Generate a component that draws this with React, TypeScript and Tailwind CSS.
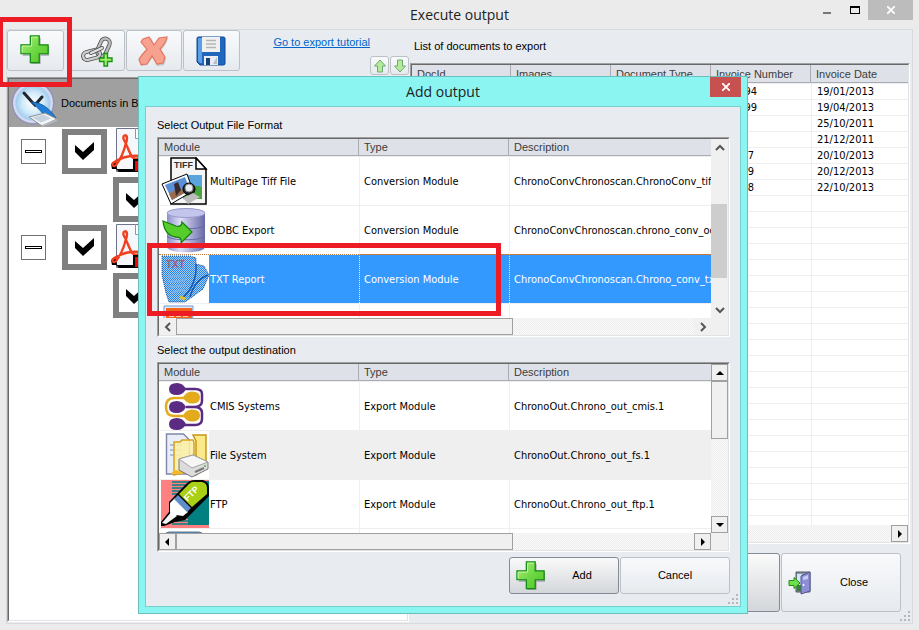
import React from "react";

const CHECKER =
  "bg-[repeating-conic-gradient(#ececec_0_25%,#fbfbfb_0_50%)] bg-[length:2px_2px]";
const UI_FONT = "font-['Liberation_Sans',sans-serif]";

function PlusIcon({ size }: { size: number }) {
  return (
    <svg width={size} height={size} viewBox="0 0 32 32" className="shrink-0" aria-hidden="true">
      <defs>
        <linearGradient id="plus" x1="0" y1="0" x2="1" y2="1">
          <stop offset="0" stopColor="#b4f07c" />
          <stop offset="0.5" stopColor="#6fd846" />
          <stop offset="1" stopColor="#4fc41f" />
        </linearGradient>
      </defs>
      <path d="M12 3h10v9h9v10h-9v9H12v-9H3V12h9z" fill="#8b8f93" opacity=".7" />
      <path d="M11 1h9.500v9.500H30v9.500h-9.500V29.500H11V20H1v-9.500h10z" fill="url(#plus)" stroke="#0f8a12" strokeWidth="1.300" />
      <path d="M12.300 11.800V2.300h6.900M2.300 18.500v-6.700h10" fill="none" stroke="#c9f7a4" strokeWidth="1" />
    </svg>
  );
}

function ChainIcon() {
  return (
    <svg width="32" height="32" viewBox="0 0 32 32" aria-hidden="true">
      <g fill="none" strokeLinejoin="round">
        <rect x="18" y="3" width="9" height="18" rx="4.500" transform="rotate(24 22 12)" stroke="#4d4d4d" strokeWidth="4" />
        <rect x="18" y="3" width="9" height="18" rx="4.500" transform="rotate(24 22 12)" stroke="#bdbdbd" strokeWidth="2.400" />
        <rect x="2" y="16" width="17" height="8" rx="4" transform="rotate(-14 10 20)" stroke="#4d4d4d" strokeWidth="4" />
        <rect x="2" y="16" width="17" height="8" rx="4" transform="rotate(-14 10 20)" stroke="#cfcfcf" strokeWidth="2.400" />
        <path d="M10 18l11-5" stroke="#4d4d4d" strokeWidth="4" strokeLinecap="round" />
        <path d="M10 18l11-5" stroke="#e2e2e2" strokeWidth="2.400" strokeLinecap="round" />
      </g>
      <path d="M23 18.500h3.500v4.500H31v3.500h-4.500V31H23v-4.500h-4.500V23H23z" fill="#a5f06a" stroke="#169416" strokeWidth="1.400" />
    </svg>
  );
}

function DeleteIcon() {
  return (
    <svg width="32" height="32" viewBox="0 0 32 32" aria-hidden="true">
      <path d="M7 5l6-2 4 8 6-7 7-1c-1 5-4 9-7 12l5 9-2 6-7 1-4-9-6 8-6 1-1-5c2-5 5-8 8-11L5 8z" fill="#9a9a9a" opacity=".5" />
      <path d="M5 4l6-2 5 8 5-7 8-1c-1 5-4 9-7 12l5 8-2 6-6 1-5-8-5 8-6 .500-2-5c2-4 5-7 8-10L3 7z" fill="#f6a28e" stroke="#e5755f" strokeWidth="1.200" />
    </svg>
  );
}

function FloppyIcon() {
  return (
    <svg width="30" height="30" viewBox="0 0 30 30" aria-hidden="true">
      <path d="M1 2.500Q1 1 2.500 1h25Q29 1 29 2.500v25q0 1.500-1.500 1.500H4l-3-3z" fill="#2166bd" stroke="#0f4692" />
      <path d="M2 2h4v25H4l-2-2z" fill="#5ba0e6" />
      <rect x="6" y="1" width="18" height="15" fill="#f0f0f0" />
      <path d="M10 4.500h10M10 8h10M10 11.500h10" stroke="#b5b5b5" strokeWidth="1.500" />
      <rect x="8" y="20" width="14" height="9" fill="#e9edf3" />
      <rect x="10" y="22" width="4" height="7" fill="#16407e" />
      <path d="M17 28l4-7v7z" fill="#b8bdc4" />
    </svg>
  );
}

function ArrowIcon({ down }: { down?: boolean }) {
  return (
    <svg width="14" height="14" viewBox="0 0 14 14" aria-hidden="true" className={down ? "rotate-180" : ""}>
      <path d="M7 1l5.500 6H9.500v6h-5V7h-3z" fill="#b4eb9b" stroke="#6fa873" strokeLinejoin="round" />
    </svg>
  );
}

function ClockIcon() {
  return (
    <svg width="48" height="48" viewBox="0 0 48 48" className="shrink-0" aria-hidden="true">
      <defs>
        <radialGradient id="clock">
          <stop offset="0" stopColor="#fff" />
          <stop offset=".6" stopColor="#d3ebfa" />
          <stop offset="1" stopColor="#9dcbee" />
        </radialGradient>
      </defs>
      <circle cx="22" cy="24" r="21.500" fill="#8e93b8" />
      <circle cx="22" cy="24" r="20" fill="#d4d9ef" />
      <circle cx="22" cy="24" r="17.500" fill="url(#clock)" />
      <path d="M13 14l8 9 3 3 7-8" stroke="#20242c" strokeWidth="3" fill="none" strokeLinecap="round" />
      <path d="M20 23c8 0 17 4 25 16l-12-3c-4-5-8-9-13-13z" fill="#1f7fd8" stroke="#0f5296" strokeWidth=".8" />
      <path d="M18 38l16-4 12 6-15 7z" fill="#f3f5f7" stroke="#8a8f96" />
      <path d="M21 38.500l12-3 7 4-10 4z" fill="#c5d2de" />
      <path d="M46 40v2l-15 6v-2z" fill="#b4b9c0" />
    </svg>
  );
}

function PdfIcon() {
  return (
    <svg width="48" height="46" viewBox="0 0 48 46" className="shrink-0" aria-hidden="true">
      <path d="M5.500.500h23l12 12v31h-35z" fill="#f6f7fb" stroke="#6f7488" />
      <path d="M24.500.500v10h14" fill="#fff" stroke="#8c94b4" />
      <path d="M0 36l5-2 1 7H1zM5 41h35v3H8z" fill="#000" />
      <path d="M14 7c-2 1-2 3-1 5 3 5 5 12 8 17 2 2 5 2 7 1M14 7c3 1 2 5 1 8-2 8-5 16-10 22-2 2-5 0-3-2 7-5 17-8 27-7" fill="none" stroke="#f0401f" strokeWidth="2.400" />
      <path d="M22 31h24v13H22z" fill="#000" />
      <path d="M24 33h20v3h-7v7h-5v-7h-3v7h-5z" fill="#f00" />
    </svg>
  );
}

function DoorIcon() {
  return (
    <svg width="24" height="24" viewBox="0 0 24 24" aria-hidden="true">
      <path d="M8 1h14v20H8z" fill="#8c93a0" stroke="#4f5664" />
      <path d="M9 3h5v16H9z" fill="#cfe8fb" />
      <path d="M9 14h5v6H9z" fill="#2e8b2b" />
      <path d="M13 5l9-4v19l-9 3z" fill="#8c8fd6" stroke="#55588f" />
      <path d="M15 6l5-2v4l-5 1z" fill="#c8caf2" />
      <circle cx="15.500" cy="14" r="1" fill="#fff" />
      <path d="M1 9.500h5v-3l6 5.500-6 5.500v-3H1z" fill="#72e04a" stroke="#1d8f14" />
    </svg>
  );
}

function TiffIcon() {
  return (
    <svg width="48" height="48" viewBox="0 0 48 48" aria-hidden="true">
      <path d="M10 1h25l10 11v35H10z" fill="#f5f5f5" stroke="#000" strokeWidth="1.500" />
      <path d="M35 1v11h10z" fill="#fff" stroke="#000" strokeWidth="1.500" />
      <text x="13" y="11" fontSize="9" fill="#333" fontFamily="Liberation Sans" fontWeight="700">TIFF</text>
      <path d="M22 18h19v24H22z" fill="#5ba5df" />
      <path d="M22 34q8-8 19-4v12H22z" fill="#49a63f" />
      <path d="M1 27l25-10 6 17-22 13z" fill="#fff" stroke="#000" strokeWidth="1" />
      <path d="M4 28l20-8 5 13-18 10z" fill="#5b8fd8" />
      <path d="M8 37l9-6 8 4-14 8z" fill="#9a6a4a" />
      <path d="M13 27l4-2 3 8-5 6z" fill="#3b2a2c" />
      <circle cx="28" cy="32" r="6" fill="#222" stroke="#000" />
      <circle cx="28" cy="31" r="4" fill="#e9edf1" stroke="#888" />
      <path d="M22 41l10-5 7 4-12 7z" fill="#bcbcbc" />
    </svg>
  );
}

function OdbcIcon() {
  return (
    <svg width="48" height="48" viewBox="0 0 48 48" aria-hidden="true">
      <defs>
        <linearGradient id="drum">
          <stop offset="0" stopColor="#8d8fc9" />
          <stop offset=".35" stopColor="#dfe0f8" />
          <stop offset="1" stopColor="#6668a6" />
        </linearGradient>
      </defs>
      <path d="M6 7c0-6 38-6 38 0v34c0 7-38 7-38 0z" fill="url(#drum)" />
      <ellipse cx="25" cy="7" rx="19" ry="4.500" fill="#c4c5ec" stroke="#9a9bce" />
      <path d="M6 19c2 5 36 5 38 0M6 30c2 5 36 5 38 0" fill="none" stroke="#6668a6" />
      <path d="M2 15l13 5c3 1 6 0 6-4l10 10-11 11c1-4-1-6-5-6C7 30 3 25 2 15z" fill="#55cd2b" stroke="#16810e" strokeWidth="1.300" />
    </svg>
  );
}

function TxtIcon() {
  return (
    <svg width="48" height="48" viewBox="0 0 48 48" aria-hidden="true">
      <defs>
        <pattern id="dither" width="2" height="2" patternUnits="userSpaceOnUse">
          <path d="M0 0h1v1H0zM1 1h1v1H1z" fill="#2784ea" />
        </pattern>
      </defs>
      <path d="M1 1h28l6 2v6l8 2 5 9-6 14-11 8-7 5H8L5 38 1 20z" fill="#a9cdf2" />
      <path d="M1 1h28l6 2v6l8 2 5 9-6 14-11 8-7 5H8L5 38 1 20z" fill="url(#dither)" stroke="#164f91" strokeDasharray="1 1" />
      <text x="5" y="13" fontSize="10" fontWeight="700" fill="#a0607c" fontFamily="Liberation Sans">TXT</text>
      <path d="M7 22l18-2M8 27l17-2M9 32l16-2M11 37l13-2" stroke="#77afe9" strokeWidth="2" />
      <path d="M35 9c1 13-4 27-15 35M47 20c-8 3-15 11-18 22" fill="none" stroke="#155ab2" strokeWidth="1.500" />
      <path d="M19 42l5 2" stroke="#d6c33a" strokeWidth="3" />
    </svg>
  );
}

function DocIcon() {
  return (
    <svg width="48" height="48" viewBox="0 0 48 48" aria-hidden="true">
      <path d="M3 2h29l-1 44H3z" fill="#dfeafc" stroke="#6f94d4" />
      <path d="M5 4h26v15H5z" fill="#f2641a" />
      <path d="M8 8h21M8 12h21" stroke="#fcd0a0" strokeWidth="2" strokeDasharray="5 2" />
    </svg>
  );
}

function CmisIcon() {
  return (
    <svg width="48" height="48" viewBox="0 0 48 48" aria-hidden="true">
      <g fill="none" strokeWidth="2.500">
        <path d="M16 7h18q7 0 7 5v7q0 6-8 6h-8M33 25q8 0 8 6v6q0 6-7 6H16" stroke="#5b2a83" />
        <path d="M30 16H13q-8 0-8 9t8 9h17" stroke="#e3ab1c" />
      </g>
      <g fill="#5b2a83">
        <path d="M16 1q6 0 9 6-3 6-9 6-8 0-8-6t8-6M16 19q6 0 9 6-3 6-9 6-8 0-8-6t8-6M16 36q6 0 9 6-3 6-9 6-8 0-8-6t8-6" />
      </g>
      <g fill="#e3ab1c">
        <path d="M31 9.500q8 0 8 6t-8 6q-6 0-9-6 3-6 9-6M31 27.500q8 0 8 6t-8 6q-6 0-9-6 3-6 9-6" />
      </g>
    </svg>
  );
}

function FolderIcon() {
  return (
    <svg width="48" height="48" viewBox="0 0 48 48" aria-hidden="true">
      <path d="M5.500 3h17l6 6v34h-23z" fill="#e9edf8" stroke="#7f86a6" strokeWidth="1.400" />
      <path d="M9 14h12M9 19h12M9 24h12" stroke="#b3bcdc" strokeWidth="2" />
      <path d="M32 4h13v32l-10 8V10z" fill="#fbe98a" stroke="#c8961a" strokeWidth="1.500" />
      <path d="M13 11h6l2-2h11l1 2v28l-20 5z" fill="#fbf0a4" fillOpacity=".88" stroke="#d6a21c" strokeWidth="1.500" />
      <path d="M10 43h12v-3l-9-1z" fill="#f2b92b" />
      <path d="M18 28l14-4 15 7v7l-16 8-13-7z" fill="#dcdcdc" stroke="#777" />
      <path d="M18 28l14-4 15 7-16 6z" fill="#f6f6f6" stroke="#a5a5a5" />
      <path d="M34 41l9-4" stroke="#777" strokeWidth="2" />
      <circle cx="44" cy="35" r="1" fill="#3fbf35" />
    </svg>
  );
}

function FtpIcon() {
  return (
    <svg width="48" height="48" viewBox="0 0 48 48" aria-hidden="true">
      <path d="M0 0h48v48H0z" fill="#ff8080" />
      <path d="M27 1h21v44H27z" fill="#008080" />
      <path d="M11 2h16M11 5h16M11 8h16M11 11h16M11 14h16M11 35h16M11 38h16M11 41h16M11 44h16" stroke="#008080" strokeWidth="1.500" />
      <path d="M0 42l8-10V22L25 4q4-4 9-4h8q6 2 6 8v8L24 40l-10 2-11 4H0z" fill="#000" />
      <path d="M1 43l10-12 5 5-11 8z" fill="#f4f4f4" />
      <path d="M9 23l5-5 13 14-5 4-7-1-4 2-2-5z" fill="#fff" />
      <path d="M13 19l4-4 13 13-4 4z" fill="#5f8fca" />
      <path d="M18 14L28 4q3-3 7-2h6q5 1 5 6v6l-15 13z" fill="#a9d015" />
      <text x="22" y="17" fontSize="9" fontWeight="700" fill="#fff" fontFamily="Liberation Sans" transform="rotate(-45 30 14)">FTP</text>
    </svg>
  );
}

function BlueIcon() {
  return (
    <svg width="48" height="48" viewBox="0 0 48 48" aria-hidden="true">
      <rect x="4" y="3" width="38" height="40" rx="4" fill="#3a93dc" stroke="#6b7280" />
    </svg>
  );
}

function Grip() {
  return (
    <svg width="11" height="11" viewBox="0 0 11 11" className="absolute right-px bottom-px" aria-hidden="true">
      <path d="M8 0h2v2H8zM4 4h2v2H4zM8 4h2v2H8zM0 8h2v2H0zM4 8h2v2H4zM8 8h2v2H8z" fill="#b4b8be" />
    </svg>
  );
}

function Sunken({ className, children }: { className?: string; children: React.ReactNode }) {
  return (
    <div className={`flex flex-col border border-t-[#a0a0a0] border-l-[#a0a0a0] border-r-white border-b-white ${className ?? ""}`}>
      <div className="flex min-h-0 flex-1 flex-col border border-t-[#696969] border-l-[#696969] border-r-[#e3e3e3] border-b-[#e3e3e3] bg-white">
        {children}
      </div>
    </div>
  );
}

type Dir = "up" | "down" | "left" | "right";
const SOLID: Record<Dir, string> = {
  up: "M4 10l4-4 4 4z",
  down: "M4 6l4 4 4-4z",
  left: "M9 4L5 8l4 4z",
  right: "M6 4l4 4-4 4z",
};
const CHEVRON: Record<Dir, string> = {
  up: "M4 10l4-4 4 4",
  down: "M4 6l4 4 4-4",
  left: "M10 4L6 8l4 4",
  right: "M6 4l4 4-4 4",
};

function ScrollButton({ dir, classic }: { dir: Dir; classic?: boolean }) {
  return (
    <button
      aria-label={`Scroll ${dir}`}
      className={`flex size-[17px] shrink-0 items-center justify-center bg-[#f0f0f0] ${classic ? "border border-[#a0a0a0]" : ""}`}
    >
      <svg width="16" height="16" viewBox="0 0 16 16" className="shrink-0" aria-hidden="true">
        {classic ? (
          <path d={SOLID[dir]} fill="#000" />
        ) : (
          <path d={CHEVRON[dir]} fill="none" stroke="#555" strokeWidth="2" />
        )}
      </svg>
    </button>
  );
}

type ModuleRow = {
  icon: React.ReactNode;
  name: string;
  type: string;
  desc: string;
  state?: "selected" | "shaded";
};

function ModuleList({ rows, classic, height }: { rows: ModuleRow[]; classic?: boolean; height: string }) {
  return (
    <Sunken className={height}>
      <div className="flex min-h-0 flex-1">
        <div className="min-w-0 flex-1 overflow-hidden">
          <table className="w-full table-fixed border-separate border-spacing-0 text-left">
            <thead>
              <tr className="bg-[#dee2e8] text-[#3c3c3c]">
                {["Module", "Type", "Description"].map((h, i) => (
                  <th
                    key={h}
                    className={`h-[17px] border-b border-[#a9adb3] p-0 pl-[5px] leading-4 font-normal ${UI_FONT} ${
                      i === 0 ? "w-[200px] border-r" : i === 1 ? "w-[150px] border-r" : ""
                    }`}
                  >
                    {h}
                  </th>
                ))}
              </tr>
            </thead>
            <tbody>
              {rows.map((r, i) => {
                const sel = r.state === "selected";
                const tone = sel ? "bg-[#3399ff] text-white" : r.state === "shaded" ? "bg-[#efefef]" : "";
                const edge = sel ? "border-t border-dotted border-t-[#c77a3a]" : "border-t border-t-[#efefef]";
                return (
                  <tr key={i} className="whitespace-nowrap">
                    <td className={`h-[49px] p-0 ${edge}`}>
                      <div className="flex h-12 items-stretch">
                        <div className="w-[50px] shrink-0 bg-white pl-[2px]">{r.icon}</div>
                        <div className={`flex flex-1 items-center pt-[3px] pl-px ${tone}`}>{r.name}</div>
                      </div>
                    </td>
                    <td className={`border-l border-l-[#efefef] p-0 pt-[3px] pl-1 ${edge} ${tone}`}>{r.type}</td>
                    <td className={`overflow-hidden border-l border-l-[#efefef] p-0 pt-[3px] pl-1 ${edge} ${tone}`}>{r.desc}</td>
                  </tr>
                );
              })}
            </tbody>
          </table>
        </div>
        <div className={`flex w-[17px] shrink-0 flex-col ${classic ? CHECKER : "bg-[#f0f0f0]"}`}>
          <ScrollButton dir="up" classic={classic} />
          {classic ? (
            <div className="h-[58px] border border-[#a0a0a0] bg-[#f0f0f0]" />
          ) : (
            <div className="mt-12 mr-px h-[74px] bg-[#cdcdcd]" />
          )}
          <div className="flex-1" />
          <ScrollButton dir="down" classic={classic} />
        </div>
      </div>
      <div className="flex h-[17px] shrink-0 bg-[#f0f0f0]">
        <div className={`flex min-w-0 flex-1 ${CHECKER}`}>
          <ScrollButton dir="left" classic={classic} />
          <div className="w-[61%] border border-[#a0a0a0] bg-[#f0f0f0]" />
          <div className="flex-1" />
          <ScrollButton dir="right" classic={classic} />
        </div>
        <div className="w-[17px]" />
      </div>
    </Sunken>
  );
}

const FORMATS: ModuleRow[] = [
  { icon: <TiffIcon />, name: "MultiPage Tiff File", type: "Conversion Module", desc: "ChronoConvChronoscan.ChronoConv_tiff.1" },
  { icon: <OdbcIcon />, name: "ODBC Export", type: "Conversion Module", desc: "ChronoConvChronoscan.chrono_conv_odbc.1" },
  { icon: <TxtIcon />, name: "TXT Report", type: "Conversion Module", desc: "ChronoConvChronoscan.Chrono_conv_txt.1", state: "selected" },
  { icon: <DocIcon />, name: "", type: "", desc: "" },
];

const DESTINATIONS: ModuleRow[] = [
  { icon: <CmisIcon />, name: "CMIS Systems", type: "Export Module", desc: "ChronoOut.Chrono_out_cmis.1" },
  { icon: <FolderIcon />, name: "File System", type: "Export Module", desc: "ChronoOut.Chrono_out_fs.1", state: "shaded" },
  { icon: <FtpIcon />, name: "FTP", type: "Export Module", desc: "ChronoOut.Chrono_out_ftp.1" },
  { icon: <BlueIcon />, name: "", type: "", desc: "" },
];

const DOCS: [string, string][] = [
  ["94", "19/01/2013"],
  ["99", "19/04/2013"],
  ["", "25/10/2011"],
  ["", "21/12/2011"],
  ["7", "20/10/2013"],
  ["9", "20/12/2013"],
  ["8", "22/10/2013"],
];
const DOC_ROWS: [string, string][] = [...DOCS, ...Array.from({ length: 21 }, (): [string, string] => ["", ""])];

const BTN = "flex items-center justify-center rounded-[3px] border border-[#bcc1c8] bg-linear-to-b from-[#f9fafc] to-[#e6eaee]";

function TreeCheck({ label }: { label: string }) {
  return (
    <label className="grid size-[45px] shrink-0 place-items-center">
      <input
        type="checkbox"
        defaultChecked
        aria-label={label}
        className="col-start-1 row-start-1 size-[45px] appearance-none border-6 border-[#808080] bg-white"
      />
      <svg width="20" height="20" viewBox="0 0 20 20" className="pointer-events-none col-start-1 row-start-1" aria-hidden="true">
        <path d="M0 4l8 7L19 1v8L8 19 0 11z" fill="#000" />
      </svg>
    </label>
  );
}

function TreeGroup({ n }: { n: number }) {
  return (
    <>
      <div className="flex h-12 items-center pl-3">
        <button aria-label="Collapse" className="flex size-[25px] shrink-0 items-center justify-center border border-[#707070]">
          <span className="h-[3px] w-[17px] border border-black" />
        </button>
        <div className="ml-4">
          <TreeCheck label={`Document ${n}`} />
        </div>
        <div className="ml-1">
          <PdfIcon />
        </div>
      </div>
      <div className="flex h-12 items-center pl-[104px]">
        <TreeCheck label={`Document ${n} page`} />
      </div>
    </>
  );
}

export default function App() {
  return (
    <div className="relative flex min-h-screen flex-col overflow-hidden border-r border-[#d5d5d5] bg-[#ebebeb] font-['DejaVu_Sans_Condensed','Liberation_Sans',sans-serif] text-[11px] text-black">
      <header className="relative flex h-[29px] items-center justify-center">
        <h1 className="font-['Open_Sans',sans-serif] text-[14px] leading-5 text-[#222]">Execute output</h1>
        <div className="absolute top-0 right-[6px] flex h-5 items-center">
          <button aria-label="Minimize" className="flex h-5 w-7 items-center justify-center">
            <span className="mt-[6px] h-[2px] w-2 bg-[#777]" />
          </button>
          <button aria-label="Maximize" className="flex h-5 w-[27px] items-center justify-center">
            <span className="h-2 w-[10px] border border-t-2 border-black" />
          </button>
          <button aria-label="Close window" className="flex h-5 w-[45px] items-center justify-center bg-[#bcbcbc]">
            <svg width="8" height="8" viewBox="0 0 8 8" aria-hidden="true">
              <path d="M0 0l8 8M8 0L0 8" stroke="#fff" strokeWidth="1.800" />
            </svg>
          </button>
        </div>
      </header>

      <main className="relative mx-[6px] mb-[6px] flex flex-1 border border-[#d8dadd] bg-[#e8ecf1]">
        <section className="flex w-[402px] shrink-0 flex-col pb-px">
          <div className="flex h-[47px] items-start">
            <button aria-label="Add output" className={`h-[41px] w-[57px] pr-[2px] pb-px ${BTN}`}>
              <PlusIcon size={30} />
            </button>
            <div className="ml-[5px] flex gap-px">
              <button aria-label="Link output" className={`h-[41px] w-14 ${BTN}`}>
                <ChainIcon />
              </button>
              <button aria-label="Delete output" className={`h-[41px] w-14 ${BTN}`}>
                <DeleteIcon />
              </button>
              <button aria-label="Save" className={`h-[41px] w-[57px] pr-[2px] ${BTN}`}>
                <FloppyIcon />
              </button>
            </div>
            <a href="#tutorial" className={`mt-1 ml-auto leading-4 whitespace-nowrap text-[#0066cc] underline ${UI_FONT}`}>
              Go to export tutorial
            </a>
            <div className="mt-[26px] flex gap-px">
              <button aria-label="Move up" className={`size-[19px] ${BTN}`}>
                <ArrowIcon />
              </button>
              <button aria-label="Move down" className={`size-[19px] ${BTN}`}>
                <ArrowIcon down />
              </button>
            </div>
          </div>
          <Sunken className="flex-1">
            <div className={`flex h-12 items-center gap-[2px] bg-[#a0a0a0] pl-[2px] whitespace-nowrap ${UI_FONT}`}>
              <ClockIcon />
              Documents in Batch
            </div>
            <TreeGroup n={1} />
            <TreeGroup n={2} />
          </Sunken>
        </section>

        <section className="ml-px flex min-w-0 flex-1 flex-col pt-2 pr-[2px] pb-[11px]">
          <h2 className={`ml-1 leading-4 ${UI_FONT}`}>List of documents to export</h2>
          <Sunken className="mt-[9px] flex-1">
            <div className="min-h-0 flex-1 basis-0 overflow-hidden">
              <table className="w-full table-fixed border-separate border-spacing-0 text-left whitespace-nowrap">
                <thead>
                  <tr className="bg-[#dee2e8] text-[#3c3c3c]">
                    {["DocId", "Images", "Document Type", "Invoice Number", "Invoice Date"].map((h, i) => (
                      <th
                        key={h}
                        className={`h-[18px] border-b border-[#a9adb3] p-0 pl-[5px] leading-4 font-normal ${UI_FONT} ${
                          i === 0 ? "w-[99px] border-r" : i < 4 ? "w-[100px] border-r" : ""
                        }`}
                      >
                        {h}
                      </th>
                    ))}
                  </tr>
                </thead>
                <tbody>
                  {DOC_ROWS.map(([num, date], i) => (
                    <tr key={i}>
                      <td className="h-4 border-t border-l-0 border-[#efefef] p-0" />
                      <td className="border-t border-l border-[#efefef] p-0" />
                      <td className="border-t border-l border-[#efefef] p-0" />
                      <td className="border-t border-l border-[#efefef] p-0 pt-px leading-[14px]">
                        <div className={i < 2 ? "w-[45px] text-right" : "w-[42px] text-right"}>{num}</div>
                      </td>
                      <td className="border-t border-l border-[#efefef] p-0 pt-px pl-[5px] leading-[14px]">{date}</td>
                    </tr>
                  ))}
                </tbody>
              </table>
            </div>
            <div className={`flex h-[17px] shrink-0 justify-end ${CHECKER}`}>
              <ScrollButton dir="right" classic />
            </div>
          </Sunken>
          <div className="mt-[9px] mr-[9px] flex justify-end gap-px">
            <button aria-label="Execute" className="h-[59px] w-[120px] rounded-[3px] border border-[#858b96] bg-linear-to-b from-[#fafafa] to-[#d3d6da]" />
            <button className={`flex h-[59px] w-[120px] items-center rounded-[3px] border border-[#bcc1c8] bg-linear-to-b from-[#f9fafc] to-[#e6eaee] pl-[6px] ${UI_FONT}`}>
              <DoorIcon />
              <span className="flex-1 pr-1 text-center">Close</span>
            </button>
          </div>
        </section>
        <Grip />
      </main>

      <div
        role="dialog"
        aria-label="Add output"
        className="absolute top-[76px] right-[171px] left-[138px] border border-[#6bbfbd] bg-[#8bf5f2] px-[6px] pb-[6px]"
      >
        <div className="relative flex h-[29px] items-center justify-center">
          <h2 className="font-['Open_Sans',sans-serif] text-[14px] leading-5 text-[#222]">Add output</h2>
          <button aria-label="Close dialog" className="absolute top-0 right-0 flex h-5 w-[31px] items-center justify-center bg-[#c75050]">
            <svg width="8" height="8" viewBox="0 0 8 8" aria-hidden="true">
              <path d="M0 0l8 8M8 0L0 8" stroke="#fff" strokeWidth="1.800" />
            </svg>
          </button>
        </div>
        <div className="relative border border-[#79cfce] bg-[#e8ecf1] pt-[10px] pr-[10px] pb-3 pl-[11px]">
          <h3 className={`mb-1 leading-4 ${UI_FONT}`}>Select Output File Format</h3>
          <ModuleList rows={FORMATS} height="h-[200px]" />
          <h3 className={`mt-[5px] mb-1 leading-4 ${UI_FONT}`}>Select the output destination</h3>
          <ModuleList rows={DESTINATIONS} height="h-[190px]" classic />
          <div className={`mt-[5px] flex justify-end gap-px ${UI_FONT}`}>
            <button className="flex h-[37px] w-[110px] items-center rounded-[3px] border border-[#858b96] bg-linear-to-b from-[#fafafa] to-[#d3d6da] pl-[6px]">
              <PlusIcon size={30} />
              <span className="flex-1 text-center">Add</span>
            </button>
            <button className={`h-[37px] w-[110px] ${BTN}`}>Cancel</button>
          </div>
          <Grip />
        </div>
      </div>

      <div className="pointer-events-none absolute top-[17px] -left-[2px] h-[70px] w-[74px] border-5 border-[#ed1c24]" />
      <div className="pointer-events-none absolute top-[243px] left-[147px] h-[73px] w-[354px] border-5 border-[#ed1c24]" />
    </div>
  );
}
